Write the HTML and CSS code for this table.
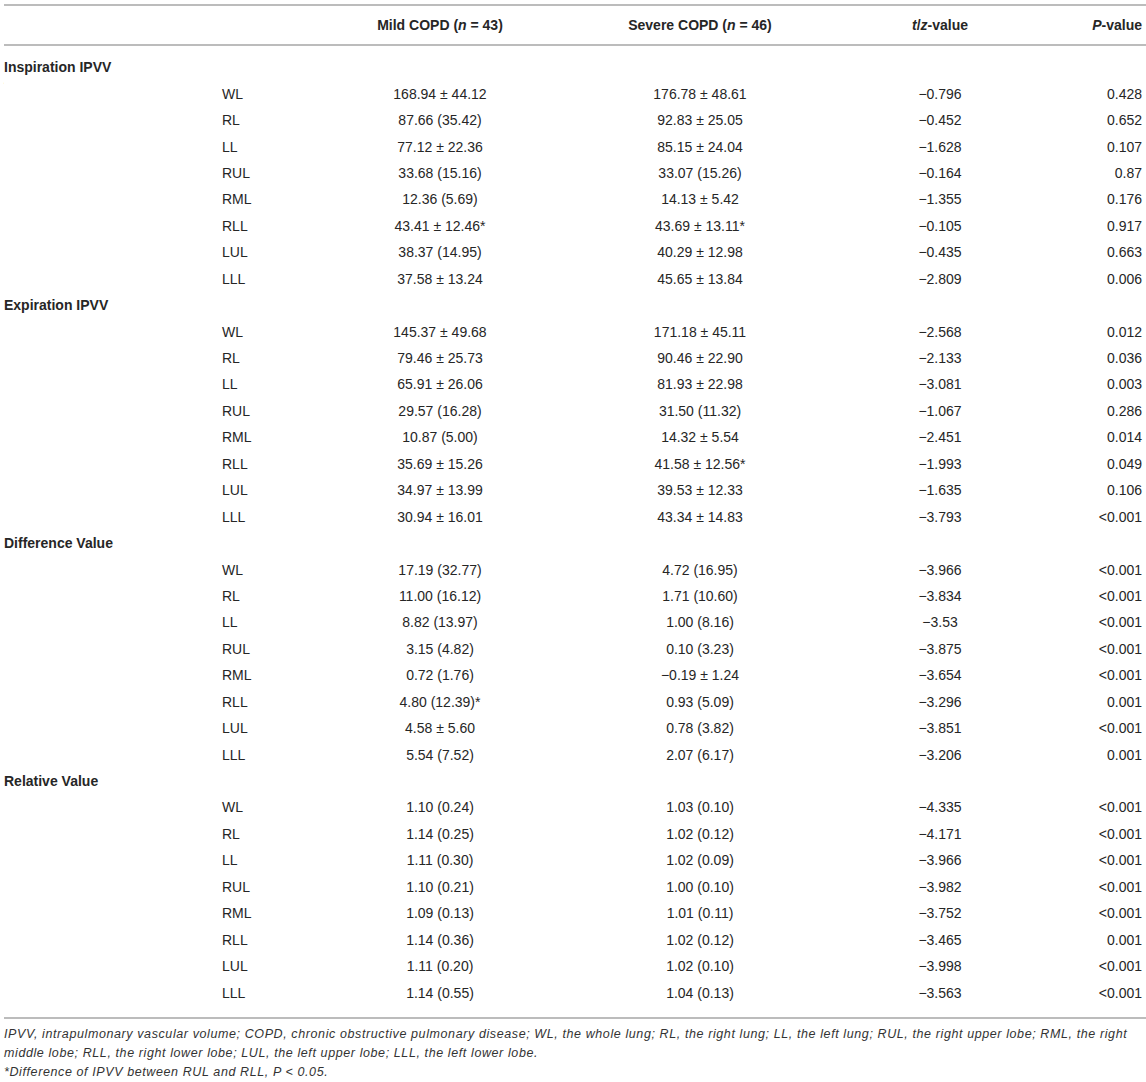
FILE: index.html
```html
<!DOCTYPE html>
<html>
<head>
    <title>IPVV in mild and severe COPD</title>
    <link rel="stylesheet" href="styles.css">
</head>
<body>
    <table class="data-table">
        <colgroup>
            <col class="col-group">
            <col class="col-lobe">
            <col class="col-mild">
            <col class="col-severe">
            <col class="col-stat">
            <col class="col-p">
        </colgroup>
        <thead>
            <tr>
                <th></th>
                <th></th>
                <th>Mild COPD (<i>n</i> = 43)</th>
                <th>Severe COPD (<i>n</i> = 46)</th>
                <th><i>t</i>/<i>z</i>-value</th>
                <th class="p-cell"><i>P</i>-value</th>
            </tr>
        </thead>
        <tbody id="table-body"></tbody>
    </table>

    <div class="table-notes">
        <p>IPVV, intrapulmonary vascular volume; COPD, chronic obstructive pulmonary disease; WL, the whole lung; RL, the right lung; LL, the left lung; RUL, the right upper lobe; RML, the right middle lobe; RLL, the right lower lobe; LUL, the left upper lobe; LLL, the left lower lobe.</p>
        <p>*Difference of IPVV between RUL and RLL, P &lt; 0.05.</p>
    </div>

    <script>
        const sections = [
            {
                title: 'Inspiration IPVV',
                rows: [
                    ['WL', '168.94 ± 44.12', '176.78 ± 48.61', '−0.796', '0.428'],
                    ['RL', '87.66 (35.42)', '92.83 ± 25.05', '−0.452', '0.652'],
                    ['LL', '77.12 ± 22.36', '85.15 ± 24.04', '−1.628', '0.107'],
                    ['RUL', '33.68 (15.16)', '33.07 (15.26)', '−0.164', '0.87'],
                    ['RML', '12.36 (5.69)', '14.13 ± 5.42', '−1.355', '0.176'],
                    ['RLL', '43.41 ± 12.46*', '43.69 ± 13.11*', '−0.105', '0.917'],
                    ['LUL', '38.37 (14.95)', '40.29 ± 12.98', '−0.435', '0.663'],
                    ['LLL', '37.58 ± 13.24', '45.65 ± 13.84', '−2.809', '0.006']
                ]
            },
            {
                title: 'Expiration IPVV',
                rows: [
                    ['WL', '145.37 ± 49.68', '171.18 ± 45.11', '−2.568', '0.012'],
                    ['RL', '79.46 ± 25.73', '90.46 ± 22.90', '−2.133', '0.036'],
                    ['LL', '65.91 ± 26.06', '81.93 ± 22.98', '−3.081', '0.003'],
                    ['RUL', '29.57 (16.28)', '31.50 (11.32)', '−1.067', '0.286'],
                    ['RML', '10.87 (5.00)', '14.32 ± 5.54', '−2.451', '0.014'],
                    ['RLL', '35.69 ± 15.26', '41.58 ± 12.56*', '−1.993', '0.049'],
                    ['LUL', '34.97 ± 13.99', '39.53 ± 12.33', '−1.635', '0.106'],
                    ['LLL', '30.94 ± 16.01', '43.34 ± 14.83', '−3.793', '<0.001']
                ]
            },
            {
                title: 'Difference Value',
                rows: [
                    ['WL', '17.19 (32.77)', '4.72 (16.95)', '−3.966', '<0.001'],
                    ['RL', '11.00 (16.12)', '1.71 (10.60)', '−3.834', '<0.001'],
                    ['LL', '8.82 (13.97)', '1.00 (8.16)', '−3.53', '<0.001'],
                    ['RUL', '3.15 (4.82)', '0.10 (3.23)', '−3.875', '<0.001'],
                    ['RML', '0.72 (1.76)', '−0.19 ± 1.24', '−3.654', '<0.001'],
                    ['RLL', '4.80 (12.39)*', '0.93 (5.09)', '−3.296', '0.001'],
                    ['LUL', '4.58 ± 5.60', '0.78 (3.82)', '−3.851', '<0.001'],
                    ['LLL', '5.54 (7.52)', '2.07 (6.17)', '−3.206', '0.001']
                ]
            },
            {
                title: 'Relative Value',
                rows: [
                    ['WL', '1.10 (0.24)', '1.03 (0.10)', '−4.335', '<0.001'],
                    ['RL', '1.14 (0.25)', '1.02 (0.12)', '−4.171', '<0.001'],
                    ['LL', '1.11 (0.30)', '1.02 (0.09)', '−3.966', '<0.001'],
                    ['RUL', '1.10 (0.21)', '1.00 (0.10)', '−3.982', '<0.001'],
                    ['RML', '1.09 (0.13)', '1.01 (0.11)', '−3.752', '<0.001'],
                    ['RLL', '1.14 (0.36)', '1.02 (0.12)', '−3.465', '0.001'],
                    ['LUL', '1.11 (0.20)', '1.02 (0.10)', '−3.998', '<0.001'],
                    ['LLL', '1.14 (0.55)', '1.04 (0.13)', '−3.563', '<0.001']
                ]
            }
        ];

        function addCell(row, text, className) {
            const td = document.createElement('td');
            td.textContent = text;
            if (className) td.classList.add(className);
            row.appendChild(td);
        }

        function buildTable() {
            const body = document.getElementById('table-body');

            sections.forEach(section => {
                const head = document.createElement('tr');
                head.classList.add('section-row');
                const th = document.createElement('td');
                th.colSpan = 6;
                th.textContent = section.title;
                head.appendChild(th);
                body.appendChild(head);

                section.rows.forEach(values => {
                    const tr = document.createElement('tr');
                    addCell(tr, '');
                    addCell(tr, values[0], 'lobe-cell');
                    addCell(tr, values[1]);
                    addCell(tr, values[2]);
                    addCell(tr, values[3]);
                    addCell(tr, values[4], 'p-cell');
                    body.appendChild(tr);
                });
            });
        }

        buildTable();
    </script>
</body>
</html>
```

FILE: styles.css
```css
body {
    margin: 0;
    padding: 4px 0 0 4px;
    background-color: #fff;
    color: #262626;
    font-family: "Liberation Sans", Arial, sans-serif;
}
.data-table {
    width: 1142px;
    border-collapse: collapse;
    table-layout: fixed;
    font-size: 14px;
}
.col-group { width: 218px; }
.col-lobe { width: 100px; }
.col-mild { width: 236px; }
.col-severe { width: 284px; }
.col-stat { width: 196px; }
.col-p { width: 108px; }

.data-table thead tr {
    border-top: 2px solid #bcbcbc;
    border-bottom: 2px solid #bcbcbc;
}
.data-table th {
    height: 38px;
    padding: 0;
    font-weight: bold;
    text-align: center;
    vertical-align: middle;
}
.data-table td {
    height: 26.45px;
    padding: 0;
    line-height: 16px;
    text-align: center;
    vertical-align: middle;
    white-space: nowrap;
}
.data-table tbody tr:first-child td {
    padding-top: 8px;
}
.data-table tbody tr:last-child td {
    padding-bottom: 11px;
}
.data-table tbody {
    border-bottom: 2px solid #bcbcbc;
}
.data-table .section-row td {
    text-align: left;
    font-weight: bold;
}
.data-table .lobe-cell {
    text-align: left;
}
.data-table .p-cell {
    text-align: right;
    padding-right: 4px;
}
.table-notes {
    padding-top: 6px;
    padding-right: 2px;
    font-size: 12.5px;
    font-style: italic;
    letter-spacing: 0.6px;
    line-height: 19px;
    color: #333;
}
.table-notes p {
    margin: 0;
}
```
